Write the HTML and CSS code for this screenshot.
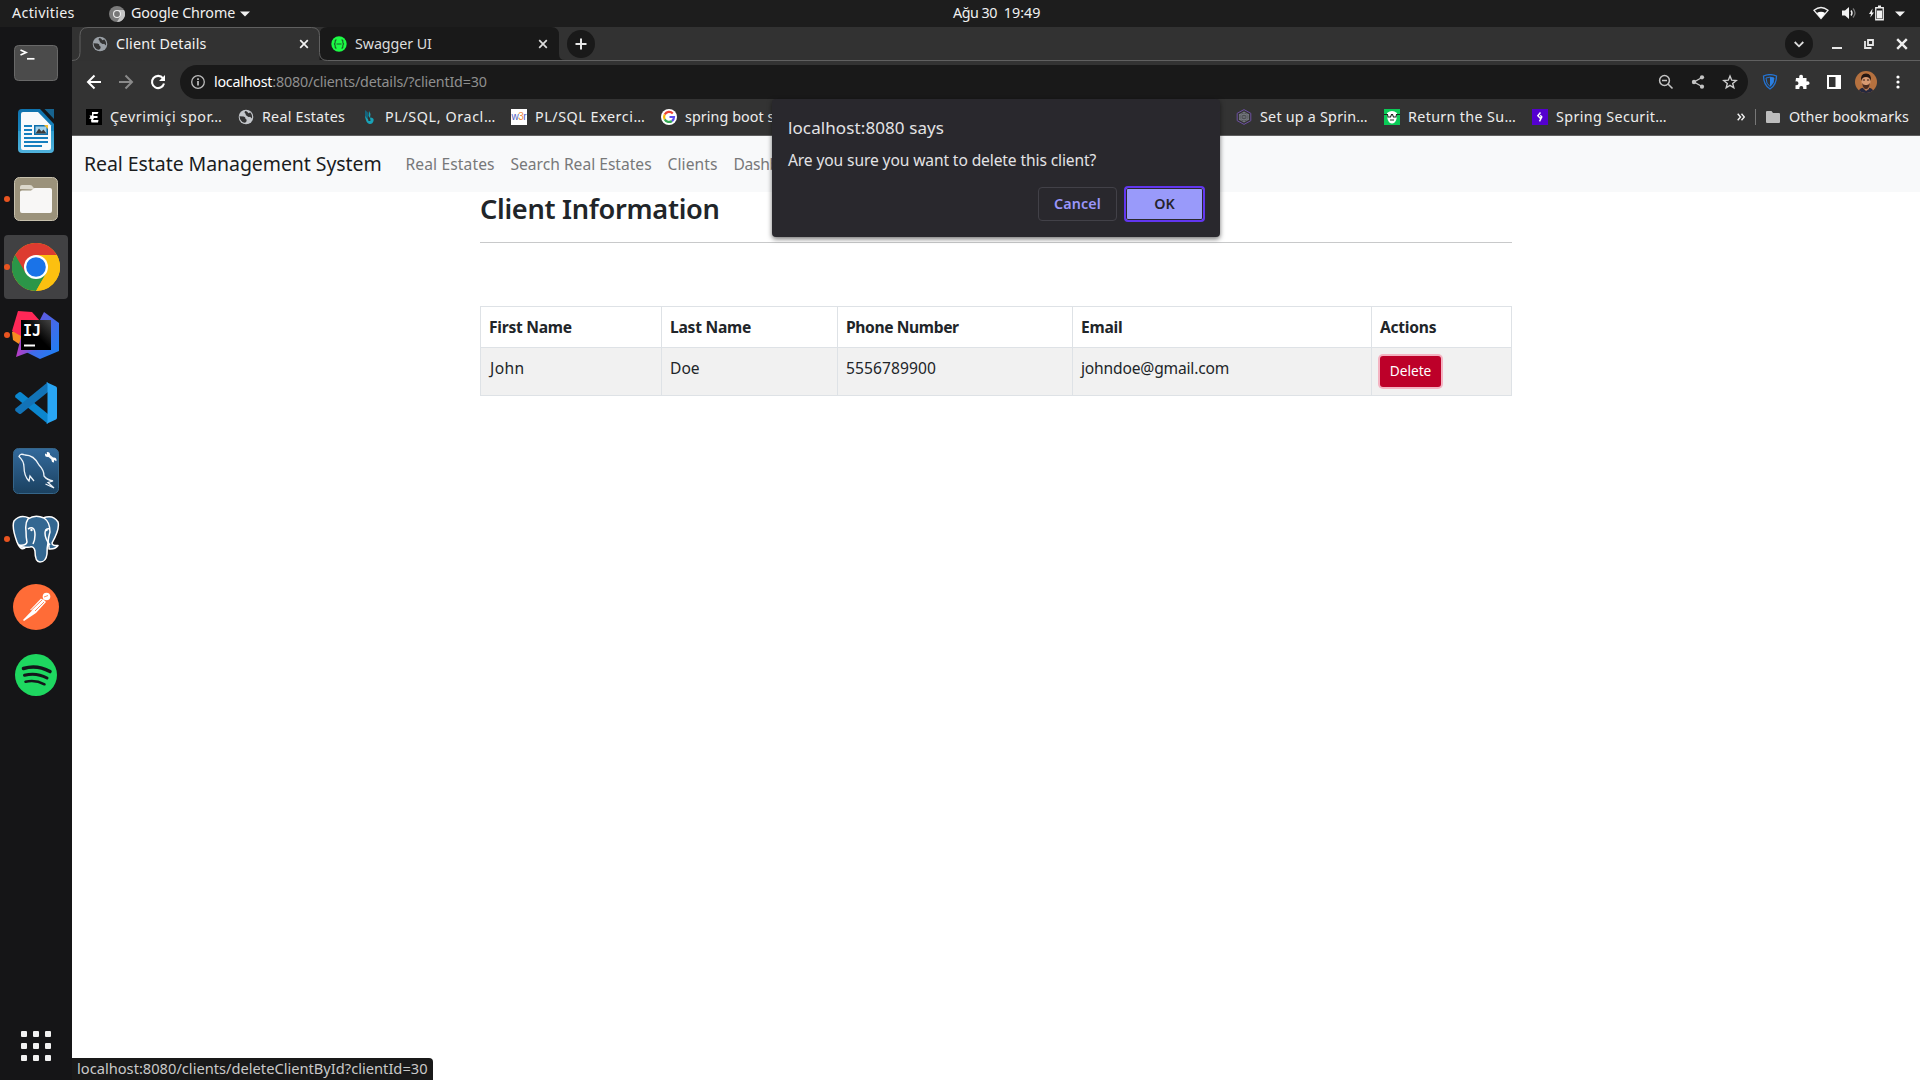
FILE: index.html
```html
<!DOCTYPE html>
<html lang="en">
<head>
<meta charset="utf-8">
<title>Client Details</title>
<link rel="stylesheet" href="styles.css">
</head>
<body>
<svg width="0" height="0" class="defs">
  <defs>
    <symbol id="globe" viewBox="0 0 16 16"><circle cx="8" cy="8" r="7.3" fill="currentColor"/><path d="M1.5 7.2 L5.5 7.6 Q7.6 8 7.6 10 Q9 10.2 8.6 12 Q8.2 13.6 6.4 13.7 Q2 12.500 1.500 7.200 Z M7 2 Q5.800 4 7.600 4.700 Q7.400 6.500 9.200 7 Q10 8.300 12 7.700 L14 9.500 Q14.600 5.500 12 3.200 Q10.800 5 9.800 3.600 Q9.600 2.200 7 2 Z" fill="#333"/></symbol>
    <symbol id="cross" viewBox="0 0 10 10"><path d="M1.200 1.200 L8.800 8.800 M8.800 1.200 L1.200 8.800" stroke="currentColor" stroke-width="1.700" fill="none"/></symbol>
    <linearGradient id="writer" x1="0" y1="0" x2="0" y2="1"><stop offset="0" stop-color="#0f72ad"/><stop offset=".5" stop-color="#1a86bf"/><stop offset=".5" stop-color="#2e9ccd"/><stop offset="1" stop-color="#4fb1dc"/></linearGradient>
    <linearGradient id="bluebox" x1="0" y1="0" x2="0" y2="1"><stop offset="0" stop-color="#336a9c"/><stop offset="1" stop-color="#1b4160"/></linearGradient>
    <linearGradient id="ijblack" x1="1" y1="0" x2="0" y2="1"><stop offset="0" stop-color="#444"/><stop offset=".5" stop-color="#000"/></linearGradient>
    <linearGradient id="ijblue" x1="0" y1="0" x2="1" y2="1"><stop offset="0" stop-color="#7a4bd8"/><stop offset="1" stop-color="#1584f7"/></linearGradient>
    <linearGradient id="ijpurple" x1="0" y1="0" x2="1" y2="0"><stop offset="0" stop-color="#bb3bc4"/><stop offset="1" stop-color="#2f6ff0"/></linearGradient>
  </defs>
</svg>

<header class="topbar">
  <span class="activities">Activities</span>
  <span class="appmenu">
    <svg width="16" height="16" viewBox="0 0 16 16"><circle cx="8" cy="8" r="8" fill="#7b7b7b"/><path d="M8 4 H15 A8 8 0 0 1 8 16 L11.500 10Z" fill="#c4c4c4"/><circle cx="8" cy="8" r="4" fill="#eee"/><circle cx="8" cy="8" r="2.900" fill="#777"/></svg>
    <span class="appname">Google Chrome</span>
    <svg width="10" height="6" viewBox="0 0 10 6"><path d="M0 .5H10L5 5.500Z" fill="#f2f2f2"/></svg>
  </span>
  <span class="clock"><span class="date">Ağu 30</span><span>19:49</span></span>
  <span class="tray">
    <svg width="16" height="14" viewBox="0 0 16 14"><path d="M1 4.300 Q8-1.300 15 4.300 L8 12.500Z" fill="none" stroke="#eee" stroke-width="1.300"/><path d="M3.800 7 Q8 4.500 12.200 7 L8 12.500Z" fill="#fff"/></svg>
    <svg width="16" height="14" viewBox="0 0 16 14"><path d="M1 4.500H4L8 1V13L4 9.500H1Z" fill="#f2f2f2"/><path d="M10 4.500Q12 7 10 9.500" fill="none" stroke="#eee" stroke-width="1.400"/><path d="M12 2.500Q16 7 12 11.500" fill="none" stroke="#777" stroke-width="1.300"/></svg>
    <svg width="16" height="16" viewBox="0 0 16 16"><path d="M3.500 3.500L0 9H2L1.300 12.500L5 7.500H3Z" fill="#eee"/><path d="M6.750 2.750H14.250V14.750H6.750Z" fill="none" stroke="#eee" stroke-width="1.300"/><path d="M9 .5H12V2H9Z M8 5.500H13V13.500H8Z" fill="#f2f2f2"/></svg>
    <svg width="10" height="6" viewBox="0 0 10 6"><path d="M0 .5H10L5 5.500Z" fill="#f2f2f2"/></svg>
  </span>
</header>

<div class="desktop">
  <nav class="dock">
    <div class="app"><svg width="48" height="48" viewBox="0 0 48 48"><rect x="2.500" y="6.500" width="43" height="35" rx="4" fill="#4b4b4b" stroke="#686868"/><path d="M8.500 11L14 13.500L8.500 16" fill="none" stroke="#fff" stroke-width="1.700"/><path d="M15 19.800H22.500" stroke="#fff" stroke-width="1.700"/></svg></div>
    <div class="app"><svg width="48" height="48" viewBox="0 0 48 48"><path d="M10 2H28L42 17V42Q42 46 38 46H10Q6 46 6 42V6Q6 2 10 2Z" fill="url(#writer)"/><path d="M11 5H26L39 18.500V41Q39 43 37 43H11Q9 43 9 41V7Q9 5 11 5Z" fill="#f7fafc"/><path d="M32.500 2H42V12Z" fill="#17638f"/><path d="M12 19H20M12 23H20M12 27H20M12 31H36M12 35H36M12 39H30" stroke="#157fbf" stroke-width="2"/><rect x="22" y="18" width="14" height="10" fill="#0d6fab"/><rect x="23.500" y="19.500" width="11" height="7" fill="#9fd0ea"/><path d="M23.500 26.500L27 21.500L29.500 24.500L31.500 22.500L34.500 26.500Z" fill="#3c3c3c"/><path d="M32 18H36V22Z" fill="#f6bd2c"/></svg></div>
    <div class="app running"><svg width="48" height="48" viewBox="0 0 48 48"><rect x="2.500" y="2.500" width="43" height="43" rx="5" fill="#9b927b" stroke="#c7c0ad"/><path d="M8 14V12Q8 10 10 10H18Q20 10 21 12L23 14.500Z" fill="#dcd8cb"/><path d="M8 17Q8 15.500 10 15.500H19L22.500 13H38Q40 13 40 15V36Q40 38 38 38H10Q8 38 8 36Z" fill="#f8f7f6"/></svg></div>
    <div class="app running focused"><svg width="48" height="48" viewBox="0 0 48 48"><circle cx="24" cy="24" r="24" fill="#fbbc05"/><path d="M24 24L34.400 18L24 48A24 24 0 0 1 3.200 12Z" fill="#2b9648"/><path d="M24 48L34.400 30L24 24L13.600 30Z" fill="#2b9648"/><path d="M3.200 12A24 24 0 0 1 44.800 12H24L13.600 30Z" fill="#dd3b30"/><path d="M24 12H44.800A24 24 0 0 1 24 48L34.400 30Z" fill="#fcc010"/><circle cx="24" cy="24" r="12" fill="#fff"/><circle cx="24" cy="24" r="9.800" fill="#1a73e8"/></svg></div>
    <div class="app running"><svg width="48" height="48" viewBox="0 0 48 48"><path d="M32 1L47 12V40L28 48L12 40Z" fill="url(#ijblue)"/><path d="M0 21L1 29L7 33L12 24L4 19Z" fill="#f78b21"/><path d="M4 46L9 26L30 38L20 40Z" fill="url(#ijpurple)"/><path d="M6 0L20 1L28 10L22 24L9 25L0 20Z" fill="#fe2857"/><rect x="9" y="9" width="30" height="30" fill="url(#ijblack)"/><path d="M12 34.500H23" stroke="#fff" stroke-width="2"/><text x="11" y="25" font-family="DejaVu Sans Mono,monospace" font-weight="700" font-size="15" fill="#fff">IJ</text></svg></div>
    <div class="app"><svg width="48" height="48" viewBox="0 0 48 48"><path d="M3.500 16L7 13.200Q8 12.600 9 13.200L36 35V45L3.500 18.500Q2.600 17 3.500 16Z" fill="#0b86ce"/><path d="M3.500 32L7 34.800Q8 35.400 9 34.800L36 13V3L3.500 29.500Q2.600 31 3.500 32Z" fill="#1273b7"/><path d="M34 3L44 7.500Q45 8 45 9.500V38.500Q45 40 44 40.500L34 45Q35.500 44 35.500 42V6Q35.500 4 34 3Z" fill="#29a5f3"/></svg></div>
    <div class="app"><svg width="48" height="48" viewBox="0 0 48 48"><rect x="1.500" y="1.500" width="45" height="45" rx="5" fill="url(#bluebox)" stroke="#356589"/><path d="M22 34L18 29L17 34Q12 29 12 20Q12 14 7 9.500Q8 6 13 8Q22 8 27 18Q32 23 32 29Q35 33 41 34L36 35.500L42 41L33.500 37" fill="none" stroke="#eef4f9" stroke-width="1.300"/><path d="M35.500 7.500L41.500 12.500" stroke="#f5f7f9" stroke-width="2.600"/><circle cx="35.500" cy="7.500" r="2.500" fill="#fff"/><circle cx="42" cy="13" r="2.500" fill="#fff"/><path d="M31.500 5.500L35 7.500L34.500 3.500Z M42 13L46 15L42 17Z" fill="#2d608e"/></svg></div>
    <div class="app running"><svg width="48" height="48" viewBox="0 0 48 48"><g fill="#336791" stroke="#fff" stroke-width="1.500" stroke-linejoin="round"><path d="M31 3Q41-1 46 7Q48 14 40 28Q40 31 46 30.500Q43 34.500 37 34V32Z"/><path d="M17 3Q8-1 2 6Q-.5 12 5 27Q9 37 14 32L16 29Z"/><path d="M16 4Q23-1 32 3Q38 7 38 17Q36 24 36 28Q35 32 35 39Q34 47 28 47Q23 47 23 36Q22 31 18 32Q9 33 7 30Q14 31 15 27Q14 23 14 16Q13 8 16 4Z"/><path d="M16 14Q23 10 23 20Q23 25 21 29M38 14Q33 13 33 18Q33 24 38 30" fill="none"/></g><circle cx="19.500" cy="15" r="1.200" fill="#fff"/><circle cx="34.500" cy="15" r="1.200" fill="#fff"/></svg></div>
    <div class="app"><svg width="48" height="48" viewBox="0 0 48 48"><circle cx="24" cy="24" r="23" fill="#ff6c37"/><circle cx="34.500" cy="13.500" r="3.800" fill="#fff"/><path d="M31 16L34 19L24 30L12 38L11 37Z" fill="#fff"/><path d="M18 27L29 15.500L32 18L22 28Z" fill="#fff"/><path d="M18 28.500L30 17M23 28L32 19M32 14L36 12.500" stroke="#ff6c37" stroke-width=".8"/></svg></div>
    <div class="app"><svg width="48" height="48" viewBox="0 0 48 48"><circle cx="24" cy="24" r="21" fill="#1ed760"/><g fill="none" stroke="#14151a" stroke-linecap="round"><path d="M11.500 17.500Q25 13.500 38 20.500" stroke-width="3.600"/><path d="M12.500 24.300Q24 21 35 27" stroke-width="3"/><path d="M13.500 30.800Q23 28.300 32.500 33.300" stroke-width="2.500"/></g></svg></div>
    <div class="app launcher"><svg width="30" height="30" viewBox="0 0 30 30" fill="#f2f2f2"><rect width="6" height="6" rx="1"/><rect x="12" width="6" height="6" rx="1"/><rect x="24" width="6" height="6" rx="1"/><rect y="12" width="6" height="6" rx="1"/><rect x="12" y="12" width="6" height="6" rx="1"/><rect x="24" y="12" width="6" height="6" rx="1"/><rect y="24" width="6" height="6" rx="1"/><rect x="12" y="24" width="6" height="6" rx="1"/><rect x="24" y="24" width="6" height="6" rx="1"/></svg></div>
  </nav>

  <div class="browser">
    <div class="tabstrip">
      <svg class="tabshape" width="1848" height="34" viewBox="0 0 1848 34"><path d="M247.500 33V8Q247.500 0 255.500 0H479Q487 0 487 8V27Q487 33 493 33Z" fill="#191919"/><path d="M0 33.500Q8 33.500 8 25.500V8.500Q8 .5 16 .5H239.500Q247.500 .5 247.500 8.500V25.500Q247.500 33.500 255.500 33.500H1848" fill="none" stroke="#606060"/></svg>
      <div class="tab active"><svg class="tabicon" width="16" height="16"><use href="#globe"/></svg><span class="tabtitle t-client">Client Details</span><svg class="x" width="10" height="10"><use href="#cross"/></svg></div>
      <div class="tab"><svg class="tabicon" width="16" height="16" viewBox="0 0 16 16"><circle cx="8" cy="8" r="7.700" fill="#1cfb45"/><path d="M5.500 3.800Q4 3.800 4.200 6Q4.200 7.800 3 8Q4.200 8.200 4.200 10Q4 12.200 5.500 12.200M10.500 3.800Q12 3.800 11.800 6Q11.800 7.800 13 8Q11.800 8.200 11.800 10Q12 12.200 10.500 12.200M5.500 8H10.500" fill="none" stroke="#1a5f2a" stroke-width="1.200"/></svg><span class="tabtitle t-swagger">Swagger UI</span><svg class="x" width="10" height="10"><use href="#cross"/></svg></div>
      <span class="round newtab"><svg width="12" height="12" viewBox="0 0 12 12"><path d="M6 .5V11.500M.5 6H11.500" stroke="#e8e8e8" stroke-width="2"/></svg></span>
      <div class="winctl">
        <span class="round"><svg width="10" height="7" viewBox="0 0 10 7"><path d="M.7 1L5 5.300L9.300 1" fill="none" stroke="#ddd" stroke-width="1.800"/></svg></span>
        <svg class="min" width="10" height="10" viewBox="0 0 10 10"><path d="M0 9H10" stroke="#e8e8e8" stroke-width="2"/></svg>
        <svg class="restore" width="10" height="10" viewBox="0 0 10 10"><path d="M4 1H9V6H4Z M1 2V9H7.500" fill="none" stroke="#e8e8e8" stroke-width="1.800"/></svg>
        <svg class="x" width="12" height="12" viewBox="0 0 10 10"><path d="M1 1L9 9M9 1L1 9" stroke="#eee" stroke-width="2"/></svg>
      </div>
    </div>

    <div class="toolbar">
      <svg class="nav" width="16" height="16" viewBox="0 0 16 16"><path d="M15 8H2.500M8.500 1.500L2 8L8.500 14.500" fill="none" stroke="#fff" stroke-width="2"/></svg>
      <svg class="nav" width="16" height="16" viewBox="0 0 16 16"><path d="M1 8H13.500M7.500 1.500L14 8L7.500 14.500" fill="none" stroke="#8a8a8a" stroke-width="2"/></svg>
      <svg class="nav" width="16" height="16" viewBox="0 0 16 16"><path d="M13 4.300A6.100 6.100 0 1 0 14 9.500" fill="none" stroke="#fff" stroke-width="2.100"/><path d="M15 1V7H9Z" fill="#fff"/></svg>
      <div class="omnibox">
        <svg width="16" height="16" viewBox="0 0 16 16"><circle cx="8" cy="8" r="6.300" fill="none" stroke="#bbb" stroke-width="1.300"/><path d="M8 7V11.500M8 4.300V5.900" stroke="#ccc" stroke-width="1.600"/></svg>
        <span class="url"><span class="host">localhost</span><span class="path">:8080/clients/details/?clientId=30</span></span>
        <svg width="16" height="16" viewBox="0 0 16 16"><circle cx="6.500" cy="6.500" r="4.900" fill="none" stroke="#c4c4c4" stroke-width="1.500"/><path d="M10 10L14.500 14.500M4 6.500H9" stroke="#c4c4c4" stroke-width="1.600"/></svg>
        <svg width="16" height="16" viewBox="0 0 16 16"><path d="M12 3.500L4 8L12 12.500" fill="none" stroke="#c4c4c4" stroke-width="1.400"/><circle cx="12" cy="3.300" r="2.100" fill="#c4c4c4"/><circle cx="4" cy="8" r="2.200" fill="#c4c4c4"/><circle cx="12" cy="12.700" r="2.100" fill="#c4c4c4"/></svg>
        <svg width="16" height="16" viewBox="0 0 16 16"><path d="M8 2L9.700 6.200L14.200 6.500L10.700 9.400L11.800 13.800L8 11.400L4.200 13.800L5.300 9.400L1.800 6.500L6.300 6.200Z" fill="none" stroke="#ccc" stroke-width="1.400"/></svg>
      </div>
      <div class="extensions">
        <svg width="16" height="16" viewBox="0 0 16 16"><path d="M1.500 2Q8-.8 14.500 2Q14.500 11 8 15Q1.500 11 1.500 2Z" fill="none" stroke="#2474d4" stroke-width="1.300"/><path d="M4 4Q8 2.200 12 4Q12 10 8 12.500Q4 10 4 4Z" fill="none" stroke="#2474d4"/><path d="M8 3Q10 3 12 4Q12 10 8 12.500Z" fill="#2b80e2"/></svg>
        <svg width="16" height="16" viewBox="0 0 16 16"><path d="M2 4H5.300Q4.800 .7 7.100 .7Q9.400 .7 8.900 4H12.500V7.400Q15.600 7 15.600 9.200Q15.600 11.300 12.500 10.900V15H9.200Q9.600 11.900 7.300 11.900Q5 11.900 5.400 15H1.500V11.200Q4.600 11.500 4.500 9.300Q4.400 7 1.500 7.400Z" fill="#fff"/></svg>
        <svg width="16" height="16" viewBox="0 0 16 16"><path d="M2 2H14V14H2Z" fill="none" stroke="#fff" stroke-width="2"/><path d="M9.500 2H14V14H9.500Z" fill="#fff"/></svg>
        <svg class="avatar" width="22" height="22" viewBox="0 0 22 22"><clipPath id="ac"><circle cx="11" cy="11" r="11"/></clipPath><g clip-path="url(#ac)"><rect width="22" height="22" fill="#b5713f"/><path d="M3 22Q4 16 11 17Q18 16 19 22Z" fill="#24283e"/><path d="M8 12H14V18L11 20L8 17Z" fill="#b97c55"/><ellipse cx="11" cy="10.500" rx="4.500" ry="6.200" fill="#d79a72"/><path d="M6.300 10Q5 2.500 11 2.500Q17 2.500 15.700 10Q15 6 11 6Q7 6 6.300 10Z" fill="#241713"/><path d="M7 12Q8 18 11 18Q14 18 15 12Q13.500 14.500 11 14Q8.500 14.500 7 12Z" fill="#4b2c20"/><path d="M7.800 9H10M12 9H14.200" stroke="#301b14"/></g></svg>
        <svg width="16" height="16" viewBox="0 0 16 16" fill="#fff"><circle cx="8" cy="3" r="1.600"/><circle cx="8" cy="8" r="1.600"/><circle cx="8" cy="13" r="1.600"/></svg>
      </div>
    </div>

    <div class="bookmarks">
      <span class="bm b1"><svg width="16" height="16" viewBox="0 0 16 16"><path d="M0 0H16V16H0Z" fill="#000"/><path d="M6 3H12.500L11.500 5H7.500V7H11.500V9H8L7 11H12.500L12 13.500H5.500Q4.500 11.500 5.500 10L3 9.500L4.500 8L3.500 6.500L6 6.500Z" fill="#fff"/></svg><span class="l1">Çevrimiçi spor…</span></span>
      <span class="bm b2"><svg class="lightglobe" width="16" height="16"><use href="#globe"/></svg><span class="l2">Real Estates</span></span>
      <span class="bm b3"><svg width="16" height="16" viewBox="0 0 16 16"><path d="M4 1L7 3.500V9L4 8.500Z" fill="#15647c"/><path d="M4 7L7 10L7.500 12L9.500 12L9 8.500Q13.500 8.500 12.500 12Q11.500 15.500 8.500 15Q5 14.500 4 7Z" fill="#19a3b8"/><path d="M8 2L9.500 5L9 9L7.500 7Z" fill="#19a3b8"/></svg><span class="l3">PL/SQL, Oracl…</span></span>
      <span class="bm b4"><svg width="16" height="16" viewBox="0 0 16 16"><path d="M0 0H16V16H0Z" fill="#fff"/><text x=".5" y="11" font-family="Liberation Sans,sans-serif" font-size="10" fill="#4f5fc0">w<tspan fill="#f08a3c" dx="-.6">3</tspan><tspan dx="-.4">r</tspan></text></svg><span class="l4">PL/SQL Exerci…</span></span>
      <span class="bm b5"><svg width="16" height="16" viewBox="0 0 16 16"><circle cx="8" cy="8" r="8" fill="#fff"/><g fill="none" stroke-width="2.200"><path d="M11.800 4.500A5 5 0 0 0 3.700 5.600" stroke="#ea4335"/><path d="M3.700 5.600A5 5 0 0 0 3.700 10.400" stroke="#fbbc05"/><path d="M3.700 10.400A5 5 0 0 0 11 12" stroke="#34a853"/><path d="M11 12A5 5 0 0 0 13 8H8.500" stroke="#5b4cf0"/></g></svg><span class="l5">spring boot s</span></span>
      <span class="bm b6"><svg width="16" height="16" viewBox="0 0 16 16" fill="none"><path d="M8 .6L14.800 4.300V11.700L8 15.400L1.200 11.700V4.300Z" stroke="#6d50a2"/><path d="M8 3L12.500 5.500V10.500L8 13L3.500 10.500V5.500ZM3.500 5.500L12.500 10.500M12.500 5.500L3.500 10.500M8 3V13M3.500 5.500H12.500L8 13ZM3.500 10.500H12.500L8 3Z" stroke="#777a83" stroke-width=".8"/></svg><span class="l6">Set up a Sprin…</span></span>
      <span class="bm b7"><svg width="16" height="16" viewBox="0 0 16 16"><path d="M0 0H16V16H0Z" fill="#0acb57"/><path d="M3 4Q8 0 13 4L12.500 10Q11 14.500 8 14.500Q5 14.500 3.500 10Z" fill="#fff"/><path d="M0 5.500H3.500L4 8H6.500L7.500 5.500H8.500L9.500 8H12L12.500 5.500H16M6 11H10" fill="none" stroke="#1c2a22" stroke-width="1.100"/></svg><span class="l7">Return the Su…</span></span>
      <span class="bm b8"><svg width="16" height="16" viewBox="0 0 16 16"><path d="M0 0H16V16H0Z" fill="#5400cf"/><path d="M8.500 3.500L5.800 6.800L8.300 9.300L9.800 8L8.300 6.300M9.800 8L7.500 12.300" fill="none" stroke="#fff" stroke-width="1.400"/></svg><span class="l8">Spring Securit…</span></span>
      <svg class="more" width="8" height="8" viewBox="0 0 8 8"><path d="M.7 .8L3.500 4L.7 7.200M4.500 .8L7.300 4L4.500 7.200" fill="none" stroke="#f2f2f2" stroke-width="1.400"/></svg>
      <span class="sep"></span>
      <svg class="folder" width="14" height="12" viewBox="0 0 14 12"><path d="M1 0H5.500L7 2H13Q14 2 14 3V11Q14 12 13 12H1Q0 12 0 11V1Q0 0 1 0Z" fill="#bdbdbd"/></svg>
      <span class="other">Other bookmarks</span>
    </div>

    <div class="page">
      <nav class="navbar">
        <span class="brand">Real Estate Management System</span>
        <span class="link n1">Real Estates</span>
        <span class="link n2">Search Real Estates</span>
        <span class="link n3">Clients</span>
        <span class="link n4">Dashb</span>
      </nav>
      <main class="container">
        <h3>Client Information</h3>
        <hr>
        <table>
          <colgroup><col class="c1"><col class="c2"><col class="c3"><col class="c4"><col class="c5"></colgroup>
          <thead><tr><th>First Name</th><th>Last Name</th><th class="phone">Phone Number</th><th>Email</th><th>Actions</th></tr></thead>
          <tbody><tr><td class="john">John</td><td>Doe</td><td class="number">5556789900</td><td class="email">johndoe@gmail.com</td><td><button class="delete">Delete</button></td></tr></tbody>
        </table>
      </main>
    </div>
  </div>
</div>

<div class="dialog">
  <div class="title">localhost:8080 says</div>
  <div class="message">Are you sure you want to delete this client?</div>
  <div class="actions"><button class="cancel">Cancel</button><button class="ok">OK</button></div>
</div>
<div class="status">localhost:8080/clients/deleteClientById?clientId=30</div>
</body>
</html>
```
FILE: styles.css
```css
* { box-sizing: border-box; }
body {
  margin: 0;
  width: 1920px;
  height: 1080px;
  overflow: hidden;
  display: flex;
  flex-direction: column;
  font: 14.3px/20px "Noto Sans", sans-serif;
  background: #fff;
}
svg { display: block; flex: none; }
.defs { position: absolute; }
span { white-space: nowrap; }
button { font-family: inherit; padding: 0; }

/* desktop top bar */
.topbar {
  height: 27px;
  flex: none;
  display: grid;
  grid-template-columns: 109px 844px 1fr auto;
  align-items: center;
  background: #1d1d1d;
  color: #f0f0f0;
}
.activities, .appname, .clock { margin-top: -1px; }
.activities { padding-left: 12px; letter-spacing: .32px; }
.appmenu { display: flex; align-items: center; }
.appname { margin-left: 6px; margin-right: 5px; letter-spacing: -.11px; }
.clock { display: flex; gap: 7px; }
.date { letter-spacing: -.5px; }
.tray { display: flex; align-items: center; gap: 12px; padding-right: 15px; }
.tray svg:nth-child(-n+3) { position: relative; left: 2px; top: -1px; }

.desktop { flex: 1; display: flex; min-height: 0; }

/* dock */
.dock {
  width: 72px;
  flex: none;
  display: flex;
  flex-direction: column;
  gap: 4px;
  padding: 4px 4px 2px;
  background: #151517;
}
.app {
  position: relative;
  height: 64px;
  display: flex;
  align-items: center;
  justify-content: center;
  border-radius: 4px;
}
.focused { background: #414143; }
.running::before {
  content: "";
  position: absolute;
  left: 0;
  top: 29px;
  width: 6px;
  height: 6px;
  border-radius: 50%;
  background: #e95420;
}
.launcher { margin-top: auto; }

/* browser chrome */
.browser { flex: 1; min-width: 0; display: flex; flex-direction: column; }
.tabstrip {
  position: relative;
  height: 34px;
  flex: none;
  display: flex;
  align-items: center;
  padding-left: 8px;
  background: #323232;
  color: #dcdcdc;
}
.tabshape { position: absolute; left: 0; top: 0; }
.tab { position: relative; width: 239px; display: flex; align-items: center; padding: 0 10px 0 12px; }
.active { color: #f3f3f3; }
.tabicon { color: #9aa0a6; margin-right: 8px; }
.tabtitle { flex: 1; }
.t-client { letter-spacing: .18px; }
.t-swagger { letter-spacing: -.09px; }
.round {
  position: relative;
  width: 28px;
  height: 28px;
  border-radius: 50%;
  background: #191919;
  display: flex;
  align-items: center;
  justify-content: center;
}
.newtab { margin-left: 9px; }
.winctl { margin-left: auto; display: flex; align-items: center; padding-right: 12px; }
.min { margin-left: 19px; }
.restore { margin-left: 22px; }
.winctl .x { margin-left: 22px; }

.toolbar { height: 38px; flex: none; display: flex; align-items: center; padding: 4px 14px 0; background: #333; }
.nav { margin-right: 16px; }
.omnibox {
  width: 1568px;
  height: 34px;
  margin-left: -2px;
  border-radius: 17px;
  background: #191919;
  display: flex;
  align-items: center;
  gap: 16px;
  padding: 0 10px;
}
.url { flex: 1; margin-left: -8px; }
.host { color: #fff; letter-spacing: -.24px; }
.path { color: #8f8f8f; letter-spacing: -.18px; }
.extensions { flex: 1; display: flex; align-items: center; gap: 16px; padding-left: 14px; }
.avatar { margin: 0 -3px; }

.bookmarks {
  height: 37px;
  flex: none;
  display: flex;
  align-items: center;
  padding-left: 14px;
  background: #333;
  border-bottom: 1px solid #5f5f5f;
  color: #ededed;
}
.bm { display: flex; align-items: center; gap: 8px; flex: none; }
.b1 { width: 152px; }
.b2 { width: 123px; }
.b3, .b4 { width: 150px; }
.b5 { width: 575px; }
.b6, .b7 { width: 148px; }
.b8 { width: 205px; }
.lightglobe { color: #c3c6ca; }
.l1 { letter-spacing: .55px; }
.l2 { letter-spacing: .22px; }
.l3 { letter-spacing: .62px; }
.l4 { letter-spacing: .56px; }
.l5 { letter-spacing: .08px; }
.l6 { letter-spacing: .24px; }
.l7 { letter-spacing: .35px; }
.l8 { letter-spacing: .38px; }
.sep { width: 1px; height: 16px; background: #777; margin: 0 10px; }
.folder { margin-right: 9px; }
.other { letter-spacing: .1px; }

/* web page */
.page { flex: 1; background: #fff; font-size: 15.6px; line-height: 24px; color: #212529; }
.navbar { height: 56px; display: flex; align-items: center; padding-left: 12px; background: #f8f9fa; color: #777879; }
.brand { width: 321.5px; font-size: 19.5px; color: #1a1c1e; letter-spacing: -.07px; }
.n1 { width: 105px; letter-spacing: .12px; }
.n2 { width: 157px; }
.n3 { width: 66px; letter-spacing: .09px; }
.n4 { letter-spacing: -.3px; }
.container { width: 1032px; margin: 0 auto; }
h3 { margin: 0; font-size: 27.2px; line-height: 34px; font-weight: 600; letter-spacing: -.3px; }
hr { height: 1px; border: 0; margin: 16px 0 63px; background: #c8c9ca; }
table { width: 1031px; table-layout: fixed; border-collapse: collapse; }
.c1 { width: 181px; }
.c2 { width: 176px; }
.c3 { width: 235px; }
.c4 { width: 299px; }
.c5 { width: 140px; }
th, td { border: 1px solid #dee2e6; padding: 8px; text-align: left; vertical-align: top; }
th { letter-spacing: -.25px; }
.phone { letter-spacing: -.38px; }
.number { letter-spacing: .08px; }
tbody tr { background: #f1f1f1; }
td.john { letter-spacing: .4px; padding-left: 9px; }
.email { letter-spacing: -.18px; }
.delete {
  display: block;
  width: 61px;
  height: 31px;
  border: 0;
  border-radius: 3px;
  background: #bd0029;
  box-shadow: 0 0 0 2px #f4b3c2;
  color: #fff;
  font-size: 13.7px;
  padding-bottom: 2px;
}

/* confirm dialog, over the browser */
.dialog {
  position: absolute;
  left: 772px;
  top: 99px;
  width: 448px;
  height: 138px;
  padding: 19px 15px 0 16px;
  border-radius: 4px;
  background: #29282d;
  box-shadow: 0 2px 5px rgba(0, 0, 0, .55);
  color: #e3e3e5;
}
.title { font-size: 17px; letter-spacing: .1px; }
.message { margin-top: 12px; font-size: 15.6px; letter-spacing: -.12px; }
.actions { display: flex; justify-content: flex-end; align-items: center; gap: 7px; margin-top: 16px; }
.cancel, .ok { height: 34px; border-radius: 4px; font-size: 14.3px; font-weight: 600; padding-bottom: 2px; }
.cancel { width: 79px; border: 1px solid #424148; background: transparent; color: #9a96fb; letter-spacing: .15px; }
.ok { width: 81px; height: 36px; border: 2px solid #6236ef; background: #999afa; box-shadow: inset 0 0 0 1px #29282d; color: #26242c; }

/* link target shown at the window's bottom edge */
.status {
  position: absolute;
  left: 72px;
  top: 1058px;
  width: 361px;
  height: 22px;
  padding: 0 5px;
  border-radius: 0 4px 0 0;
  background: #191919;
  color: #c9c9c9;
  font-size: 14.67px;
  line-height: 20px;
  white-space: nowrap;
}
```
